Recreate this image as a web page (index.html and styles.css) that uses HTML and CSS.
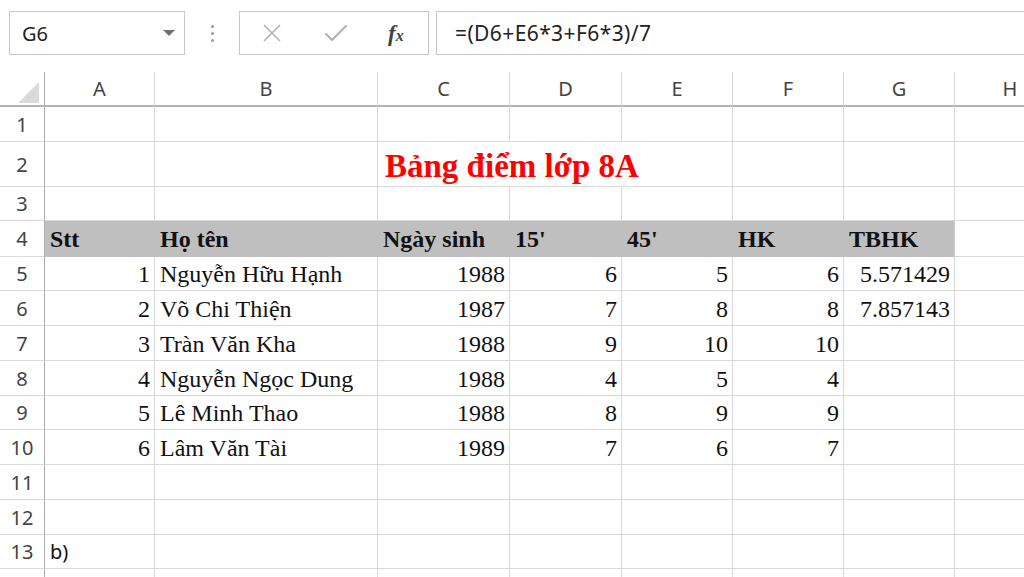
FILE: index.html
```html
<!DOCTYPE html>
<html lang="vi">
<head>
<meta charset="utf-8">
<title>Bảng điểm lớp 8A</title>
<link rel="stylesheet" href="styles.css">
</head>
<body>
<div class="toolbar">
  <div class="namebox"><span class="ref">G6</span><span class="caret"></span></div>
  <div class="dots"><i></i><i></i><i></i></div>
  <div class="btns">
    <svg class="ico" width="20" height="20" viewBox="0 0 20 20"><path d="M2 2 L18 18 M18 2 L2 18" stroke="#b3b3b3" stroke-width="1.6" fill="none"/></svg>
    <svg class="ico" width="24" height="18" viewBox="0 0 24 18"><path d="M1.5 9.5 L8 16 L22.5 1.5" stroke="#b3b3b3" stroke-width="2.2" fill="none"/></svg>
    <span class="fx"><b>f</b><b class="x">x</b></span>
  </div>
  <div class="formula">=(D6+E6*3+F6*3)/7</div>
</div>
<div class="sheet">
  <div class="corner"><span class="tri"></span></div><div class="ch">A</div><div class="ch">B</div><div class="ch">C</div><div class="ch">D</div><div class="ch">E</div><div class="ch">F</div><div class="ch">G</div><div class="ch">H</div>

  <div class="rh">1</div><div class="c"></div><div class="c"></div><div class="c"></div><div class="c"></div><div class="c"></div><div class="c"></div><div class="c"></div><div class="c"></div>

  <div class="rh">2</div><div class="c"></div><div class="c"></div><div class="c title nob">Bảng điểm lớp 8A</div><div class="c nob"></div><div class="c"></div><div class="c"></div><div class="c"></div><div class="c"></div>

  <div class="rh">3</div><div class="c"></div><div class="c"></div><div class="c"></div><div class="c"></div><div class="c"></div><div class="c"></div><div class="c"></div><div class="c"></div>

  <div class="rh">4</div><div class="c hd">Stt</div><div class="c hd">Họ tên</div><div class="c hd">Ngày sinh</div><div class="c hd">15'</div><div class="c hd">45'</div><div class="c hd">HK</div><div class="c hd last">TBHK</div><div class="c"></div>

  <div class="rh">5</div><div class="c r">1</div><div class="c">Nguyễn Hữu Hạnh</div><div class="c r">1988</div><div class="c r">6</div><div class="c r">5</div><div class="c r">6</div><div class="c r">5.571429</div><div class="c"></div>

  <div class="rh">6</div><div class="c r">2</div><div class="c">Võ Chi Thiện</div><div class="c r">1987</div><div class="c r">7</div><div class="c r">8</div><div class="c r">8</div><div class="c r">7.857143</div><div class="c"></div>

  <div class="rh">7</div><div class="c r">3</div><div class="c">Tràn Văn Kha</div><div class="c r">1988</div><div class="c r">9</div><div class="c r">10</div><div class="c r">10</div><div class="c"></div><div class="c"></div>

  <div class="rh">8</div><div class="c r">4</div><div class="c">Nguyễn Ngọc Dung</div><div class="c r">1988</div><div class="c r">4</div><div class="c r">5</div><div class="c r">4</div><div class="c"></div><div class="c"></div>

  <div class="rh">9</div><div class="c r">5</div><div class="c">Lê Minh Thao</div><div class="c r">1988</div><div class="c r">8</div><div class="c r">9</div><div class="c r">9</div><div class="c"></div><div class="c"></div>

  <div class="rh">10</div><div class="c r">6</div><div class="c">Lâm Văn Tài</div><div class="c r">1989</div><div class="c r">7</div><div class="c r">6</div><div class="c r">7</div><div class="c"></div><div class="c"></div>

  <div class="rh">11</div><div class="c"></div><div class="c"></div><div class="c"></div><div class="c"></div><div class="c"></div><div class="c"></div><div class="c"></div><div class="c"></div>

  <div class="rh">12</div><div class="c"></div><div class="c"></div><div class="c"></div><div class="c"></div><div class="c"></div><div class="c"></div><div class="c"></div><div class="c"></div>

  <div class="rh">13</div><div class="c sans">b)</div><div class="c"></div><div class="c"></div><div class="c"></div><div class="c"></div><div class="c"></div><div class="c"></div><div class="c"></div>

  <div class="rh"></div><div class="c"></div><div class="c"></div><div class="c"></div><div class="c"></div><div class="c"></div><div class="c"></div><div class="c"></div><div class="c"></div>
</div>
</body>
</html>
```
FILE: styles.css
```css
html, body {
  margin: 0;
  padding: 0;
  background: #ffffff;
  overflow: hidden;
  width: 1024px;
  height: 577px;
}

body {
  font-family: "Noto Sans", "Open Sans", sans-serif;
  color: #222;
}

/* ---------- formula bar ---------- */
.toolbar {
  height: 72px;
  box-sizing: border-box;
  padding: 11px 0 0 9px;
  display: flex;
  align-items: flex-start;
}

.toolbar > * {
  flex: none;
}

.namebox {
  width: 176px;
  height: 44px;
  box-sizing: border-box;
  border: 1px solid #c6c6c6;
  display: flex;
  align-items: center;
  justify-content: space-between;
  padding: 0 9px 0 12px;
}

.ref {
  font-size: 20px;
  color: #222;
}

.caret {
  width: 0;
  height: 0;
  border-left: 6px solid transparent;
  border-right: 6px solid transparent;
  border-top: 6px solid #707070;
}

.dots {
  width: 54px;
  height: 44px;
  display: flex;
  flex-direction: column;
  align-items: center;
  justify-content: center;
  gap: 4px;
}

.dots i {
  display: block;
  width: 3px;
  height: 3px;
  border-radius: 50%;
  background: #9a9a9a;
}

.btns {
  width: 190px;
  height: 44px;
  box-sizing: border-box;
  border: 1px solid #c6c6c6;
  display: flex;
  align-items: center;
  padding: 0 0 0 22px;
}

.ico {
  display: block;
  flex: none;
}

.btns .ico:nth-child(2) {
  margin-left: 42px;
}

.fx {
  margin-left: 40px;
  font-family: "Liberation Serif", "DejaVu Serif", serif;
  font-style: italic;
  color: #444;
  font-size: 23px;
  line-height: 1;
}

.fx .x {
  font-size: 16px;
}

.formula {
  margin-left: 7px;
  width: 600px;
  height: 44px;
  box-sizing: border-box;
  border: 1px solid #c6c6c6;
  display: flex;
  align-items: center;
  padding-left: 18px;
  font-size: 21px;
  letter-spacing: 0.4px;
  color: #222;
}

/* ---------- sheet grid ---------- */
.sheet {
  display: grid;
  grid-template-columns: 45px 110px 223px 132px 112px 111px 111px 111px 111px;
  grid-template-rows: 35px 35px 45px 34px 36px 34px 35px 35px 35px 34px 35px 35px 35px 34px 35px;
  width: 1066px;
}

.corner {
  border-right: 1px solid #ababab;
  border-bottom: 2px solid #b4b4b4;
  position: relative;
}

.tri {
  position: absolute;
  left: 18px;
  top: 10px;
  width: 0;
  height: 0;
  border-left: 21px solid transparent;
  border-bottom: 21px solid #dadada;
}

.ch {
  border-right: 1px solid #d6d6d6;
  border-bottom: 2px solid #b4b4b4;
  display: flex;
  align-items: center;
  justify-content: center;
  font-size: 20px;
  color: #444;
}

.rh {
  border-right: 1px solid #ababab;
  border-bottom: 1px solid #d9d9d9;
  display: flex;
  align-items: center;
  justify-content: center;
  font-size: 20px;
  color: #444;
}

.c {
  box-sizing: border-box;
  border-right: 1px solid #d9d9d9;
  border-bottom: 1px solid #d9d9d9;
  display: flex;
  align-items: flex-end;
  padding: 0 4px 2px 5px;
  font-family: "Liberation Serif", "Times New Roman", serif;
  font-size: 24px;
  color: #111;
  white-space: nowrap;
  overflow: hidden;
  min-width: 0;
}

.r {
  justify-content: flex-end;
}

.nob {
  border-right-color: transparent;
}

.title {
  overflow: visible;
  position: relative;
  z-index: 1;
  color: #ff0000;
  font-weight: bold;
  font-size: 33px;
  padding-left: 7px;
  padding-bottom: 1px;
}

.hd {
  background: #bfbfbf;
  border-right-color: #bfbfbf;
  border-bottom-color: #bfbfbf;
  font-weight: bold;
  padding-left: 5px;
  padding-bottom: 3px;
}

.hd.last {
  border-right-color: #d0d0d0;
}

.sans {
  font-family: "Noto Sans", "Open Sans", sans-serif;
  font-size: 20px;
  padding-bottom: 3px;
}
```
